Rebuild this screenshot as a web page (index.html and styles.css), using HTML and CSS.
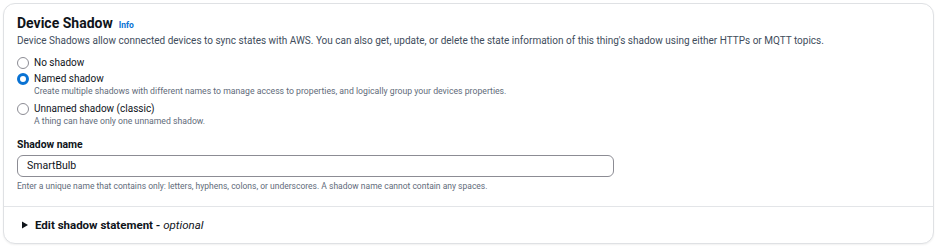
FILE: index.html
```html
<!DOCTYPE html>
<html>
<head>
<meta charset="utf-8">
<link rel="stylesheet" href="styles.css">
</head>
<body>
<div class="card">
  <div class="body">
    <div class="header">
      <h2 class="title">Device Shadow</h2>
      <span class="info">Info</span>
    </div>
    <p class="desc">Device Shadows allow connected devices to sync states with AWS. You can also get, update, or delete the state information of this thing's shadow using either HTTPs or MQTT topics.</p>
    <div class="radios">
      <div class="radio">
        <span class="dot"></span>
        <div class="rtext"><div class="rlabel">No shadow</div></div>
      </div>
      <div class="radio">
        <span class="dot checked"></span>
        <div class="rtext"><div class="rlabel">Named shadow</div><div class="rdesc">Create multiple shadows with different names to manage access to properties, and logically group your devices properties.</div></div>
      </div>
      <div class="radio">
        <span class="dot"></span>
        <div class="rtext"><div class="rlabel">Unnamed shadow (classic)</div><div class="rdesc">A thing can have only one unnamed shadow.</div></div>
      </div>
    </div>
    <div class="field">
      <label class="flabel">Shadow name</label>
      <div class="input">SmartBulb</div>
      <div class="hint">Enter a unique name that contains only: letters, hyphens, colons, or underscores. A shadow name cannot contain any spaces.</div>
    </div>
  </div>
  <div class="expander">
    <svg class="caret" width="8" height="8" viewBox="0 0 8 8"><path d="M1 0.5 L7 4 L1 7.5 Z" fill="#0f141a"/></svg>
    <span class="etitle">Edit shadow statement - <em>optional</em></span>
  </div>
</div>
</body>
</html>
```
FILE: styles.css
```css
* { box-sizing: border-box; }
html, body { margin: 0; padding: 0; background: #fff; }
body {
  padding: 3px 6px 3px 3px;
  font-family: Roboto, "Open Sans", sans-serif;
  color: #0f141a;
}
.card {
  border: 1px solid #dfe1e4;
  border-radius: 12px;
  background: #fff;
  height: 241px;
  display: flex;
  flex-direction: column;
  box-shadow: 0 1px 2px rgba(0,0,0,0.06);
}
.body {
  padding: 8px 13px 0 13px;
  border-bottom: 1px solid #e3e5e8;
  height: 203px;
  flex: none;
}
.header { display: flex; align-items: baseline; gap: 6px; }
.title {
  margin: 0;
  font-size: 14px;
  font-weight: 700;
  line-height: 22px;
}
.info { font-size: 8.5px; font-weight: 700; color: #0972d3; }
.desc {
  margin: 0;
  font-size: 10px;
  line-height: 14px;
  color: #414d5c;
}
.radios { margin-top: 7px; display: flex; flex-direction: column; }
.radio { display: flex; align-items: flex-start; gap: 5px; }
.radio + .radio { margin-top: 1px; }
.radio:nth-child(3) { margin-top: 4px; }
.dot {
  width: 12px; height: 12px; border-radius: 50%;
  border: 1.3px solid #8c8c94;
  margin-top: 1.5px;
  flex: none;
  background: #fff;
}
.dot.checked { border: 3.5px solid #0972d3; }
.rlabel { font-size: 10px; line-height: 15px; color: #0f141a; }
.rdesc { font-size: 8.7px; line-height: 11px; color: #5f6b7a; }
.field { margin-top: 10px; }
.flabel { display: block; font-size: 10.4px; font-weight: 700; line-height: 15px; }
.input {
  margin-top: 2.5px;
  width: 597px;
  height: 22px;
  border: 1px solid #8c8c94;
  border-radius: 6px;
  padding: 0 9px;
  font-size: 10.5px;
  line-height: 20px;
}
.hint { margin-top: 3px; font-size: 8.5px; line-height: 12px; color: #5f6b7a; }
.expander {
  flex: 1;
  display: flex; align-items: center; gap: 6px;
  padding: 0 17px;
}
.caret { flex: none; }
.etitle { font-size: 11.5px; font-weight: 700; }
.etitle em { font-weight: 400; }
```
